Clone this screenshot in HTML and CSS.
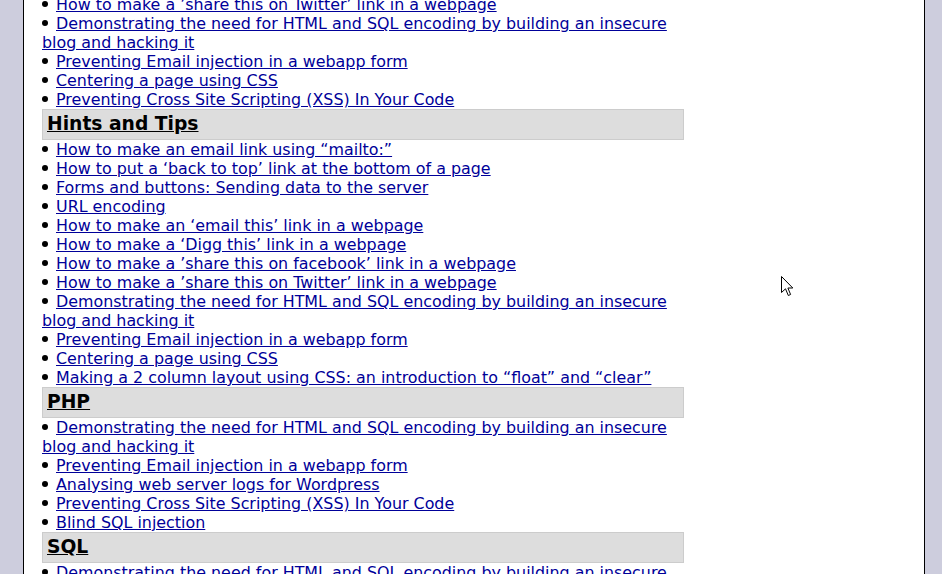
FILE: index.html
```html
<!DOCTYPE html>
<html>
<head>
<meta charset="utf-8">
<link rel="stylesheet" href="styles.css">
</head>
<body>
<div class="page">
  <div class="content">
    <ul class="links">
      <li><a href="#">How to make a ’share this on Twitter’ link in a webpage</a></li>
      <li><a href="#">Demonstrating the need for HTML and SQL encoding by building an insecure blog and hacking it</a></li>
      <li><a href="#">Preventing Email injection in a webapp form</a></li>
      <li><a href="#">Centering a page using CSS</a></li>
      <li><a href="#">Preventing Cross Site Scripting (XSS) In Your Code</a></li>
    </ul>
    <h3 class="cat"><a href="#">Hints and Tips</a></h3>
    <ul class="links">
      <li><a href="#">How to make an email link using “mailto:”</a></li>
      <li><a href="#">How to put a ‘back to top’ link at the bottom of a page</a></li>
      <li><a href="#">Forms and buttons: Sending data to the server</a></li>
      <li><a href="#">URL encoding</a></li>
      <li><a href="#">How to make an ‘email this’ link in a webpage</a></li>
      <li><a href="#">How to make a ‘Digg this’ link in a webpage</a></li>
      <li><a href="#">How to make a ’share this on facebook’ link in a webpage</a></li>
      <li><a href="#">How to make a ’share this on Twitter’ link in a webpage</a></li>
      <li><a href="#">Demonstrating the need for HTML and SQL encoding by building an insecure blog and hacking it</a></li>
      <li><a href="#">Preventing Email injection in a webapp form</a></li>
      <li><a href="#">Centering a page using CSS</a></li>
      <li><a href="#">Making a 2 column layout using CSS: an introduction to “float” and “clear”</a></li>
    </ul>
    <h3 class="cat"><a href="#">PHP</a></h3>
    <ul class="links">
      <li><a href="#">Demonstrating the need for HTML and SQL encoding by building an insecure blog and hacking it</a></li>
      <li><a href="#">Preventing Email injection in a webapp form</a></li>
      <li><a href="#">Analysing web server logs for Wordpress</a></li>
      <li><a href="#">Preventing Cross Site Scripting (XSS) In Your Code</a></li>
      <li><a href="#">Blind SQL injection</a></li>
    </ul>
    <h3 class="cat"><a href="#">SQL</a></h3>
    <ul class="links">
      <li><a href="#">Demonstrating the need for HTML and SQL encoding by building an insecure blog and hacking it</a></li>
      <li><a href="#">Preventing Email injection in a webapp form</a></li>
    </ul>
  </div>
</div>
<svg class="cursor" width="13" height="21" viewBox="0 0 13 21">
  <path d="M0.5 0.5 L0.5 16.5 L4.5 12.8 L7.3 19.5 L9.6 18.5 L6.9 12 L11.8 12 Z" fill="#fff" stroke="#000" stroke-width="1" stroke-linejoin="miter"/>
</svg>
</body>
</html>
```
FILE: styles.css
```css
html, body {
  margin: 0;
  padding: 0;
  height: 100%;
  overflow: hidden;
}
body {
  background: #cdcddd;
  font-family: "DejaVu Sans", sans-serif;
  font-size: 15.9px;
  line-height: 19px;
  color: #000;
}
.page {
  margin-left: 23px;
  width: 900px;
  min-height: 100%;
  background: #fff;
  border-left: 1px solid #000;
  border-right: 1px solid #000;
  overflow: hidden;
}
.content {
  width: 642px;
  margin-left: 18px;
  margin-top: -5px;
}
.links {
  list-style: none;
  margin: 0;
  padding: 0;
}
.links li::before {
  content: "";
  display: inline-block;
  width: 6px;
  height: 6px;
  border-radius: 50%;
  background: #000;
  margin-right: 8px;
  vertical-align: 3px;
}
.links a {
  color: #000099;
  text-decoration: underline;
}
.cat {
  margin: 0;
  background: #dddddd;
  border: 1px solid #cccccc;
  padding: 2px 4px 4px;
  font-size: 18.72px;
  line-height: 23px;
  font-weight: bold;
}
.cat a {
  color: #000;
}
.cursor {
  position: absolute;
  left: 781px;
  top: 276px;
}
```
